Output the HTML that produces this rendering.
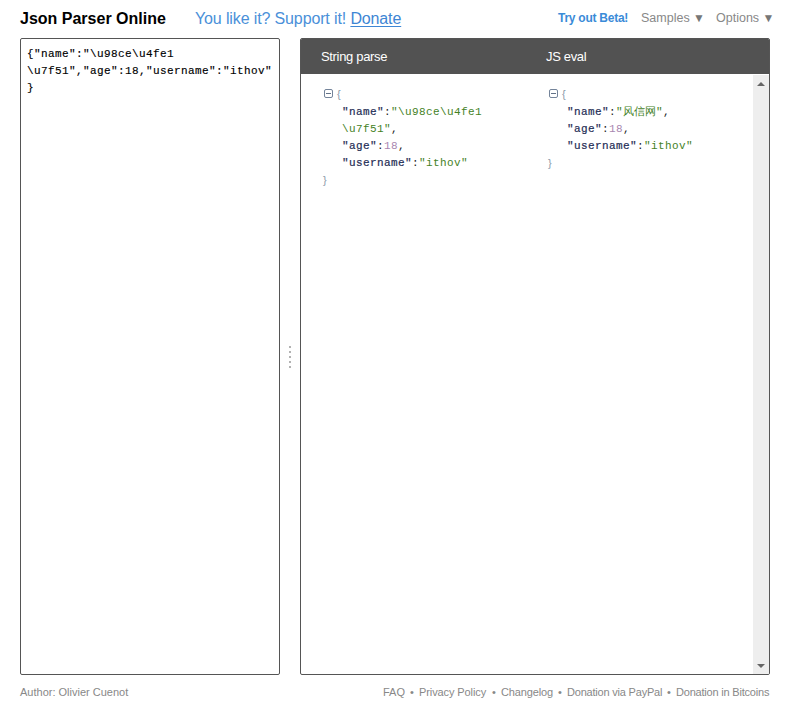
<!DOCTYPE html>
<html><head><meta charset="utf-8">
<style>
html,body{margin:0;padding:0;background:#fff;}
body{width:790px;height:709px;position:relative;overflow:hidden;font-family:"Liberation Sans",sans-serif;}
.abs{position:absolute;white-space:nowrap;}
#title{left:20px;top:9px;font-size:16px;font-weight:bold;color:#000;line-height:20px;}
#support{left:195px;top:9px;font-size:16px;letter-spacing:-0.13px;color:#4a90d9;line-height:20px;}
#support u{color:#3e86d4;text-underline-offset:2px;}
#beta{left:558px;top:10px;font-size:12px;font-weight:bold;letter-spacing:-0.25px;color:#3a8bd8;line-height:16px;}
#samples{left:641px;top:10px;font-size:12.5px;color:#888;line-height:16px;}
#options{left:716px;top:10px;font-size:12.5px;color:#888;line-height:16px;}
.tri{font-size:12px;color:#777;}
#ta{left:20px;top:38px;width:258px;height:635px;border:1px solid #555;border-radius:2px;}
#tatext{left:27px;top:46px;font-family:"Liberation Mono",monospace;font-size:11px;letter-spacing:0.4px;line-height:17px;color:#000;-webkit-text-stroke:0.15px #000;}
#split{left:289px;top:346px;width:2px;height:22px;}
#split i{position:absolute;left:0;width:2px;height:2px;background:#b2b2b2;}
#panel{left:300px;top:38px;width:468px;height:635px;border:1px solid #555;border-radius:2px;overflow:hidden;}
#phead{position:absolute;left:0;top:0;width:468px;height:35px;background:#525252;}
.ph{position:absolute;top:10px;color:#fff;font-size:13px;line-height:16px;letter-spacing:-0.33px;}
#scroll{position:absolute;left:452px;top:36px;width:16px;height:599px;background:#eee;}
#scroll i{position:absolute;left:4px;width:0;height:0;border-left:4px solid transparent;border-right:4px solid transparent;}
#scroll .up{top:7px;border-bottom:4px solid #666;}
#scroll .dn{top:589px;border-top:4px solid #666;}
.tree{position:absolute;top:50px;font-family:"Liberation Mono",monospace;font-size:11px;letter-spacing:0.4px;line-height:17px;}
.box{position:absolute;width:7px;height:7px;border:1px solid #74849a;border-radius:2px;}
.box:after{content:"";position:absolute;left:1px;top:3px;width:5px;height:1px;background:#627288;}
.br{position:absolute;font-family:"Liberation Sans",sans-serif;font-size:11px;color:#8a99a8;line-height:12px;}
.ln{position:absolute;white-space:nowrap;}
.k{color:#1f2d55;-webkit-text-stroke:0.2px #1f2d55;}
.s{color:#45821f;}
.n{color:#a886b0;}
.cjk{letter-spacing:0;font-size:11px;}
.p{color:#222;}
#author{left:20px;top:685px;font-size:11px;color:#888;line-height:14px;}
.ft{top:685px;font-size:11px;color:#888;line-height:14px;}
</style></head><body>
<div class="abs" id="title">Json Parser Online</div>
<div class="abs" id="support">You like it? Support it! <u>Donate</u></div>
<div class="abs" id="beta">Try out Beta!</div>
<div class="abs" id="samples">Samples <span class="tri">&#9660;</span></div>
<div class="abs" id="options">Options <span class="tri">&#9660;</span></div>

<div class="abs" id="ta"></div>
<div class="abs" id="tatext">{"name":"\u98ce\u4fe1<br>\u7f51","age":18,"username":"ithov"<br>}</div>

<div class="abs" id="split"><i style="top:0"></i><i style="top:5px"></i><i style="top:10px"></i><i style="top:15px"></i><i style="top:20px"></i></div>

<div class="abs" id="panel">
  <div id="phead">
    <div class="ph" style="left:20px">String parse</div>
    <div class="ph" style="left:245px">JS eval</div>
  </div>
  <div id="scroll"><i class="up"></i><i class="dn"></i></div>

  <div class="tree" style="left:0">
    <div class="box" style="left:23px;top:0px"></div>
    <div class="br" style="left:36px;top:-1px">{</div>
    <div class="ln" style="left:41px;top:15px"><span class="k">"name"</span><span class="p">:</span><span class="s">"\u98ce\u4fe1</span></div>
    <div class="ln" style="left:41px;top:32px"><span class="s">\u7f51"</span><span class="p">,</span></div>
    <div class="ln" style="left:41px;top:49px"><span class="k">"age"</span><span class="p">:</span><span class="n">18</span><span class="p">,</span></div>
    <div class="ln" style="left:41px;top:66px"><span class="k">"username"</span><span class="p">:</span><span class="s">"ithov"</span></div>
    <div class="br" style="left:22px;top:85px">}</div>
  </div>

  <div class="tree" style="left:225px">
    <div class="box" style="left:23px;top:0px"></div>
    <div class="br" style="left:36px;top:-1px">{</div>
    <div class="ln" style="left:41px;top:15px"><span class="k">"name"</span><span class="p">:</span><span class="s">"<span class="cjk">风信网</span>"</span><span class="p">,</span></div>
    <div class="ln" style="left:41px;top:32px"><span class="k">"age"</span><span class="p">:</span><span class="n">18</span><span class="p">,</span></div>
    <div class="ln" style="left:41px;top:49px"><span class="k">"username"</span><span class="p">:</span><span class="s">"ithov"</span></div>
    <div class="br" style="left:22px;top:68px">}</div>
  </div>
</div>

<div class="abs" id="author">Author: Olivier Cuenot</div>
<div class="abs ft" style="left:383px">FAQ</div><div class="abs ft" style="left:410px">•</div>
<div class="abs ft" style="left:419px;letter-spacing:-0.1px">Privacy Policy</div><div class="abs ft" style="left:492px">•</div>
<div class="abs ft" style="left:501px;letter-spacing:-0.15px">Changelog</div><div class="abs ft" style="left:558px">•</div>
<div class="abs ft" style="left:567px;letter-spacing:-0.2px">Donation via PayPal</div><div class="abs ft" style="left:667px">•</div>
<div class="abs ft" style="left:676px;letter-spacing:-0.2px">Donation in Bitcoins</div>
</body></html>
